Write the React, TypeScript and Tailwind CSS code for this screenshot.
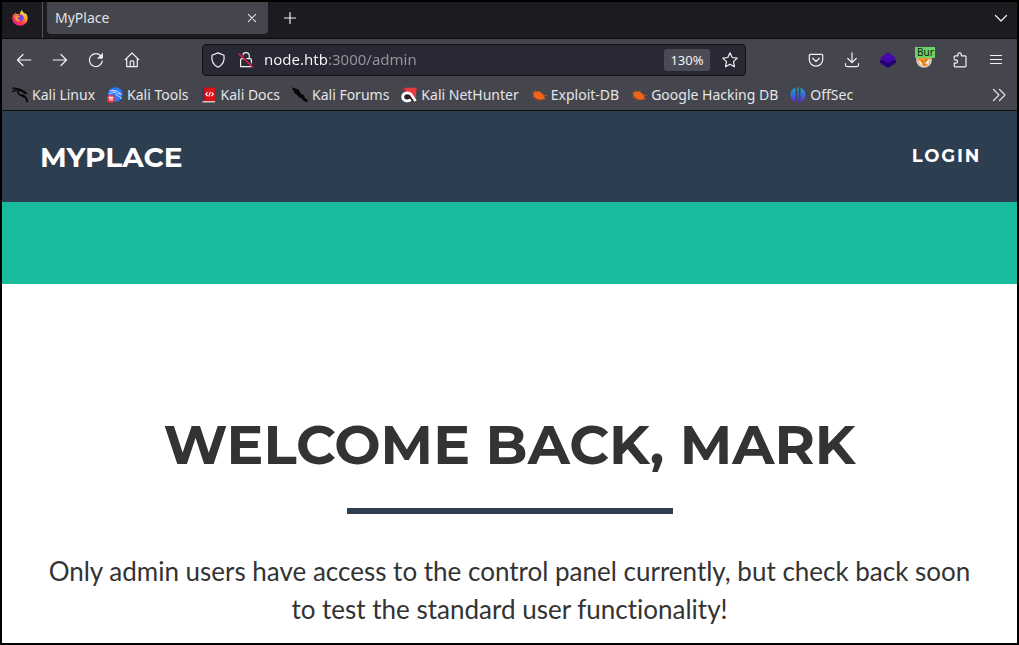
import type { ReactNode } from "react";

type IconProps = { children: ReactNode; className?: string };

function Line({ children, className = "size-4" }: IconProps) {
  return (
    <svg
      viewBox="0 0 16 16"
      className={className}
      fill="none"
      stroke="currentColor"
      strokeWidth="1.2"
      strokeLinecap="round"
      strokeLinejoin="round"
      aria-hidden="true"
    >
      {children}
    </svg>
  );
}

function Art({ children, className = "size-4" }: IconProps) {
  return (
    <svg viewBox="0 0 16 16" className={className} aria-hidden="true">
      {children}
    </svg>
  );
}

function ToolButton({ label, children }: { label: string; children: ReactNode }) {
  return (
    <button
      type="button"
      aria-label={label}
      className="flex h-8 w-9 shrink-0 items-center justify-center rounded text-[#f2f2f5] hover:bg-white/10"
    >
      {children}
    </button>
  );
}

function FirefoxLogo() {
  return (
    <Art>
      <defs>
        <linearGradient id="fox" x1="0.85" y1="0.05" x2="0.2" y2="0.95">
          <stop offset="0" stopColor="#fff44f" />
          <stop offset="0.35" stopColor="#ffa12a" />
          <stop offset="0.65" stopColor="#ff3f3f" />
          <stop offset="1" stopColor="#e5178a" />
        </linearGradient>
      </defs>
      <path
        d="M8 15.8C3.6 15.8.3 12.5.3 8.3.3 6.2 1 4.500 2 3.300L2.200 4.700 3.900 2.400 4.600 4.200C6 3.700 7.300 4 8 4.400 7.900 2.500 8.800.9 10 .1 10.300 2 12 2.900 13 4L13.300 2.900C14.900 4.400 15.700 6.200 15.700 8.300 15.700 12.500 12.400 15.800 8 15.800Z"
        fill="url(#fox)"
      />
      <circle cx="8.300" cy="8" r="3.300" fill="#7542e5" />
      <path d="M2.200 6.600C4 5.300 5.600 5.800 7.900 6.300 7.500 7.500 5.800 7.300 5.700 8.400 5.600 9.500 7 10 8.500 9.600L7 11.800 4 10.500Z" fill="#ff9a24" />
    </Art>
  );
}

function KaliDragon() {
  return (
    <Art>
      <g fill="none" stroke="#050505" strokeLinecap="round" strokeLinejoin="round">
        <path d="M.5 1.200C4 .8 7.500 1.700 10.500 3.600" strokeWidth="1.200" />
        <path d="M.8 4.600C4 2.500 7.500 2.600 10.500 4.500L13.200 6.300" strokeWidth="1.200" />
        <path d="M7 3.200C5.200 5.200 6.200 7.600 9 8.100 12.400 8.700 14.700 10.300 15.200 14.600" strokeWidth="1.600" />
        <path d="M8.500 3.500 12 4.100 14.300 6.500 11.500 5.900" strokeWidth="1.300" />
        <path d="M2 3.100 4.500 2.900M9.200 8.200 11.500 9.800" strokeWidth="1.300" />
      </g>
    </Art>
  );
}

function KaliTools() {
  return (
    <Art>
      <circle cx="8.300" cy="7.500" r="7.300" fill="#2879ff" />
      <path
        d="M2.500 4.200C6 2.900 9.500 3.600 11.800 5.300L14.100 7.300 11.300 6.700C8.300 6.500 8.700 8.400 10.800 8.900 13 9.400 14 10.700 14.200 12M2.200 7C4.800 5.300 7.300 5.200 9.300 5.900M5.200 3.300 8.500 4.400"
        fill="none"
        stroke="#d9e8ff"
        strokeWidth=".9"
      />
      <circle cx="4" cy="11.700" r="4" fill="#ef3340" />
      <path d="M1.800 10.400h4.400M3 10.500v3.300M5 10.500v3.300" fill="none" stroke="#fff" strokeWidth="1.100" />
    </Art>
  );
}

function KaliDocs() {
  return (
    <Art>
      <path d="M1.500.5h2V15h-2z" fill="#263a68" />
      <path d="M3.200.5H14V14H3.200z" fill="#d9121a" />
      <path d="M1.500 14H14v1.500H1.500z" fill="#d4c8c8" />
      <path d="M6.600 5.300 4.900 7.200 6.600 9M10.600 5.300 12.300 7.200 10.600 9M9.300 4.800 8 9.500" fill="none" stroke="#fff" strokeWidth="1.100" />
    </Art>
  );
}

function KaliForums() {
  return (
    <Art>
      <path
        d="M.3.3 6.700 2.800 9 6.700 11.800 8.300 13 10.900 15.800 12.900 15 15.300 12 14 9.500 11.500 6.300 9.800 4.600 7.200 2.300 6.200 2.200 4.300.8 3.400Z"
        fill="#060606"
      />
    </Art>
  );
}

function NetHunter() {
  return (
    <Art>
      <path d="M3.400.8 15.600.8 14.700 10.500 11.500 14.900 7 12Z" fill="#e83a3f" />
      <path d="M.8 1.400 5.400 4.500" stroke="#b92c38" strokeWidth="1.200" />
      <path d="M12.500 14.500 8.300 9.200C7.200 7.800 5.200 8.600 5.400 10 5.600 11.200 7 11.600 8.500 11.300" fill="none" stroke="#17191f" strokeWidth="2" />
      <path d="M14.500 14 10.200 7.500C7.200 4.500 2.200 5.900 1.700 9.300 1.200 13.300 5.800 15.500 9.800 12.600" fill="none" stroke="#fff" strokeWidth="2.700" />
    </Art>
  );
}

function ExploitBug() {
  return (
    <Art>
      <path d="M2 6.400C4.500 3.900 8.300 4.200 10.400 6 12.200 7.200 13.600 9 13.900 11.400 11.200 13.300 6.900 13 4.600 11 2.900 9.600 2.200 8 2 6.400Z" fill="#f26415" />
      <path
        d="M3.500 7.200.8 4.500M5.500 6 3.700 2.700M7.300 5.500 9 3.600M10 7 13.600 8.600 15.800 8.200M4.500 9.700 1.300 10.500M6 11 3.800 13.300M8.500 11.800 7.500 13.800M11.500 10.500 15 12.500"
        fill="none"
        stroke="#d65d20"
        strokeWidth=".8"
      />
    </Art>
  );
}

function OffSec() {
  return (
    <Art>
      <defs>
        <linearGradient id="off" x1="0" y1="0" x2="0" y2="1">
          <stop offset="0" stopColor="#12a9b5" />
          <stop offset="0.5" stopColor="#356ddd" />
          <stop offset="1" stopColor="#6424d6" />
        </linearGradient>
      </defs>
      <path d="M5.500.8V15.200C2.400 14.300.5 11.600.5 8S2.400 1.700 5.500.8ZM7.300.3h1.400v15.400H7.300zM10.500.8C13.700 1.700 15.500 4.400 15.500 8S13.700 14.300 10.500 15.200Z" fill="url(#off)" />
    </Art>
  );
}

const bookmarks: { label: string; icon: ReactNode }[] = [
  { label: "Kali Linux", icon: <KaliDragon /> },
  { label: "Kali Tools", icon: <KaliTools /> },
  { label: "Kali Docs", icon: <KaliDocs /> },
  { label: "Kali Forums", icon: <KaliForums /> },
  { label: "Kali NetHunter", icon: <NetHunter /> },
  { label: "Exploit-DB", icon: <ExploitBug /> },
  { label: "Google Hacking DB", icon: <ExploitBug /> },
  { label: "OffSec", icon: <OffSec /> },
];

function TabBar() {
  return (
    <div className="flex h-[37px] items-stretch border-b border-[#0c0c0d] bg-[#1b1b20]">
      <div className="flex w-[41px] shrink-0 items-center justify-center border-r border-[#55565c] pr-1 pb-1">
        <FirefoxLogo />
      </div>
      <div className="mb-1 ml-1 flex w-[221px] items-center justify-between rounded-b bg-[#44454d] pr-2 pb-px pl-2 text-[#e0e0e4]">
        <span className="text-sm">MyPlace</span>
        <button type="button" aria-label="Close tab" className="flex size-4 items-center justify-center">
          <Line>
            <path d="m4.300 4.300 7.400 7.400M11.700 4.300l-7.400 7.400" strokeWidth="1.100" />
          </Line>
        </button>
      </div>
      <button type="button" aria-label="New tab" className="mb-1 ml-3 flex w-5 items-center justify-center text-[#f2f2f5]">
        <Line>
          <path d="M8 2.500v11M2.500 8h11" />
        </Line>
      </button>
      <button type="button" aria-label="List all tabs" className="mr-2 mb-1 ml-auto flex w-4 items-center justify-center text-[#f2f2f5]">
        <Line>
          <path d="m2.500 5.500 5.500 5.500 5.500-5.500" />
        </Line>
      </button>
    </div>
  );
}

function Toolbar() {
  return (
    <div className="flex h-[41px] items-center bg-[#45464d] pr-[3px] pl-1">
      <ToolButton label="Back">
        <Line>
          <path d="M14.800 8H1.500M7 2.500 1.500 8 7 13.500" />
        </Line>
      </ToolButton>
      <ToolButton label="Forward">
        <Line>
          <path d="M1.200 8h13.300M9 2.500 14.500 8 9 13.500" />
        </Line>
      </ToolButton>
      <ToolButton label="Reload">
        <Line>
          <path d="M14.300 9.200A6.500 6.500 0 1 1 12.800 3.800" />
          <path d="M14.500 1.800v4.400h-4.400Z" fill="currentColor" strokeWidth=".8" />
        </Line>
      </ToolButton>
      <ToolButton label="Home">
        <Line>
          <path d="M1.200 7.600 8 1l6.800 6.600M2.700 6.500v8.200h10.600V6.500M6.200 14.500V9.800a1 1 0 0 1 1-1h1.600a1 1 0 0 1 1 1v4.700" />
        </Line>
      </ToolButton>

      <form
        className="mx-[52px] flex h-8 min-w-0 flex-1 items-center rounded border border-[#101014] bg-[#282934] px-[7px] text-[#f2f2f5]"
        onSubmit={(e) => e.preventDefault()}
      >
        <Line className="size-4 shrink-0">
          <path d="M8 .9 14 3.300C14.800 8.200 12.500 12.900 8 15.200 3.500 12.900 1.200 8.200 2 3.300Z" />
        </Line>
        <Line className="ml-3 size-4 shrink-0">
          <path d="M4.700 6.500V4a3.300 3.300 0 0 1 6.600 0v2.500M2.600 14.600V8a1.300 1.300 0 0 1 1.300-1.300h8.200A1.300 1.300 0 0 1 13.400 8v6.600Z" />
          <path d="m2.600 2 12.600 12" stroke="#282934" strokeWidth="1.600" />
          <path d="m1 2 13.500 13" stroke="#ee1f4b" strokeWidth="1.400" />
        </Line>
        <input
          type="text"
          aria-label="Address"
          defaultValue="node.htb:3000/admin"
          className="ml-[10px] min-w-0 flex-1 bg-[linear-gradient(to_right,#fbfbfe_64px,#96969f_64px)] bg-clip-text text-[15px] text-transparent outline-none"
        />
        <button type="button" className="h-[22px] w-[46px] shrink-0 rounded-[3px] bg-[#4a4b54] text-[13px] leading-[22px]">
          130%
        </button>
        <button type="button" aria-label="Bookmark this page" className="ml-3 shrink-0">
          <Line>
            <path d="m8 .8 2.200 4.700 5 .6-3.700 3.500 1 5.200L8 12.200l-4.500 2.600 1-5.200L.8 6.100l5-.6Z" />
          </Line>
        </button>
      </form>

      <ToolButton label="Save to Pocket">
        <Line>
          <path d="M2.500 2.300h11a1.200 1.200 0 0 1 1.200 1.200v4a6.700 6.700 0 0 1-13.400 0v-4a1.200 1.200 0 0 1 1.200-1.200ZM4.700 6.300 8 9.500l3.300-3.200" />
        </Line>
      </ToolButton>
      <ToolButton label="Downloads">
        <Line>
          <path d="M8 .8v9.700M3.800 6.500 8 10.700l4.200-4.200M1.500 11.500v1.600A1.500 1.500 0 0 0 3 14.600h10a1.500 1.500 0 0 0 1.500-1.500v-1.600" />
        </Line>
      </ToolButton>
      <ToolButton label="Wappalyzer">
        <Art>
          <path d="M0 8.300 8 4l8 4.300v2.400L8 16 0 10.700Z" fill="#230073" />
          <path d="M0 5.900 8 .2l8 5.700L8 11Z" fill="#4608ad" />
        </Art>
      </ToolButton>
      <ToolButton label="FoxyProxy">
        <span className="relative block size-4">
          <Art>
            <circle cx="8" cy="8" r="7.800" fill="#d8d1c9" />
            <circle cx="8" cy="8" r="6.300" fill="#f79429" />
            <path d="M1.800 8 4.300 12.600 7 14.300 5 9.500ZM13.800 7 11 8.500 9.500 12 12.300 12.200Z" fill="#f3eee8" />
            <path d="m5 8.700 2.500 1M9 8.500l2.500-.5M7.500 12l1.500.5" stroke="#a4561c" fill="none" />
          </Art>
          <span className="absolute -top-[5px] -left-[1px] flex h-[11px] w-5 items-center bg-[#6bd168] pl-0.5 text-[10px] leading-none text-[#102010]">
            Bur
          </span>
        </span>
      </ToolButton>
      <ToolButton label="Extensions">
        <Line>
          <path d="M2.200 6.300V4.800A1 1 0 0 1 3.200 3.800h2.700V2.500a1.700 1.700 0 0 1 3.400 0v1.300H13a1 1 0 0 1 1 1v9a1 1 0 0 1-1 1H3.200a1 1 0 0 1-1-1v-2.600h1.600a1.700 1.700 0 0 0 0-3.400H2.200" />
        </Line>
      </ToolButton>
      <ToolButton label="Open application menu">
        <Line>
          <path d="M2.500 3.500h11M2.500 7.500h11M2.500 11.500h11" />
        </Line>
      </ToolButton>
    </div>
  );
}

function BookmarksBar() {
  return (
    <nav
      aria-label="Bookmarks"
      className="flex h-[31px] items-center gap-3 border-b border-[#0c0c0d] bg-[#45464d] pr-[10px] pl-[10px] text-sm text-[#e4e4e8]"
    >
      {bookmarks.map((b) => (
        <a key={b.label} href="#" className="flex shrink-0 items-center gap-1 whitespace-nowrap">
          {b.icon}
          <span>{b.label}</span>
        </a>
      ))}
      <button type="button" aria-label="Show more bookmarks" className="ml-auto shrink-0">
        <Line>
          <path d="M2.500 2.500 8 8l-5.500 5.500M8.500 2.500 14 8l-5.500 5.500" />
        </Line>
      </button>
    </nav>
  );
}

export default function App() {
  return (
    <div className="flex min-h-screen flex-col border-2 border-black bg-white font-['Noto_Sans',sans-serif]">
      <TabBar />
      <Toolbar />
      <BookmarksBar />

      <header className="flex h-[91px] items-center justify-between bg-[#2c3e50] pr-9 pl-[38px] font-[Montserrat,Inter,sans-serif] font-bold text-white uppercase">
        <a href="#" className="text-[28px]">
          MyPlace
        </a>
        <a href="#" className="text-[18px] tracking-widest">
          Login
        </a>
      </header>
      <div className="h-[82px] bg-[#18bc9c]" />

      <main className="flex flex-col items-center px-10 pt-[130px] text-center text-[#333]">
        <h1 className="font-[Montserrat,Inter,sans-serif] text-[55px] leading-[62px] font-bold whitespace-nowrap uppercase">
          Welcome back, Mark
        </h1>
        <hr className="mt-8 h-1.5 w-[326px] border-0 bg-[#2c3e50]" />
        <p className="mt-[38px] font-[Lato,sans-serif] text-[26px] leading-[38px] [font-variant-ligatures:none]">
          Only admin users have access to the control panel currently, but check back soon to test the standard user
          functionality!
        </p>
      </main>
    </div>
  );
}
